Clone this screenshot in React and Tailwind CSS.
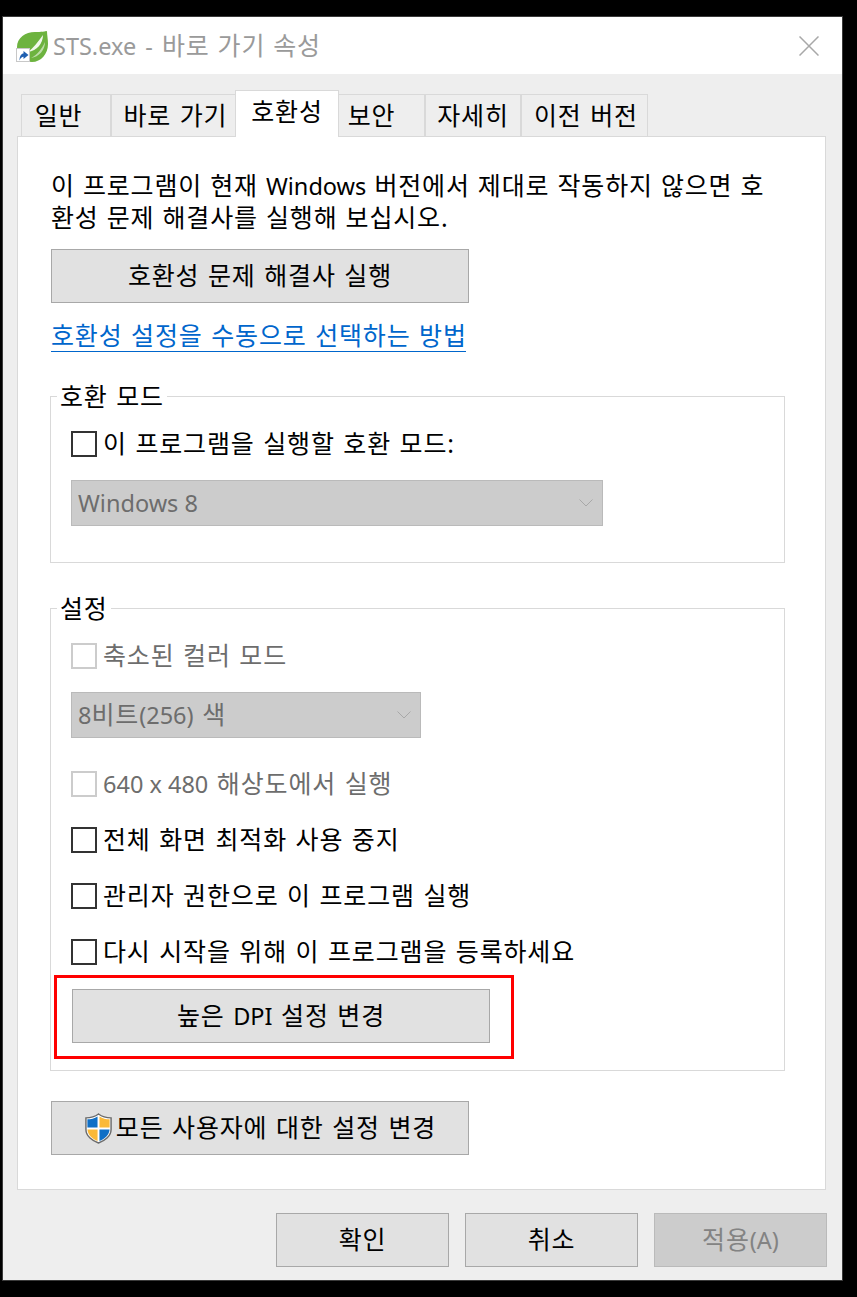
import React from 'react';

const FONT = "font-['Noto_Sans','Noto_Sans_CJK_KR',sans-serif]";

// latin runs are narrower than the hangul around them
const L = ({ children, className = '' }) => (
  <span className={`text-[23.5px] leading-none tracking-normal [word-spacing:0] ${className}`}>{children}</span>
);

const SpringIcon = () => (
  <div className="relative w-8 h-8 shrink-0">
    <svg viewBox="0 0 32 32" className="w-8 h-8">
      <path d="M31 1C31 1 27 2 21 2C11 1 1 7 1 17C1 25 8 32 16 32C25 32 32 24 32 14C32 9 31 5 31 1Z" fill="#6db33f" />
      <path d="M27 5C27 13 21 21 12 22C17 18 22 12 27 5Z" fill="#ffffff" opacity="0.9" />
      <path d="M29 12C29 20 23 27 15 28C21 25 26 19 29 12Z" fill="#ffffff" opacity="0.55" />
    </svg>
    <div className="absolute left-0 bottom-0 w-[14px] h-[14px] bg-white border border-[#c8c8c8] flex items-center justify-center">
      <svg viewBox="0 0 12 12" className="w-3 h-3">
        <path d="M2.500 11.500C2.500 7 4.500 4.500 6.500 4.500V2L11.500 6L6.500 10V7.800C5 7.800 3.500 9 2.500 11.500Z" fill="#1f5fb0" />
      </svg>
    </div>
  </div>
);

const Shield = () => (
  <svg viewBox="0 0 30 32" className="w-[29px] h-[31px] shrink-0 mr-[3px]">
    <path d="M15 1C11 4 6 5 2 5V17C2 24 9 29 15 31C21 29 28 24 28 17V5C24 5 19 4 15 1Z" fill="#ffffff" stroke="#6b6b6b" strokeWidth="1.500" />
    <path d="M14 3.500C11 5.500 7 6.500 3.500 6.500V15H14Z" fill="#0f6fc6" />
    <path d="M16 3.500C19 5.500 23 6.500 26.500 6.500V15H16Z" fill="#fbb938" />
    <path d="M3.500 17H14V29C9 27 4 23 3.500 17Z" fill="#fbb938" />
    <path d="M16 17H26.500C26 23 21 27 16 29Z" fill="#0f6fc6" />
  </svg>
);

const Chevron = () => (
  <svg viewBox="0 0 14 8" className="w-[14px] h-2">
    <path d="M0.500 0.500L7 7L13.500 0.500" fill="none" stroke="#a8a8a8" strokeWidth="1" />
  </svg>
);

const Button = ({ children, className = '' }) => (
  <div className={`h-[54px] bg-[#e1e1e1] border border-[#a8a8a8] flex items-center justify-center text-black ${className}`}>
    {children}
  </div>
);

const Check = ({ label, disabled, className = '' }) => (
  <div className={`flex items-center h-[26px] ${className}`}>
    <div className={`w-[26px] h-[26px] shrink-0 border-2 bg-white ${disabled ? 'border-[#cccccc]' : 'border-[#333333]'}`} />
    <span className={`ml-[6px] whitespace-nowrap ${disabled ? 'text-[#6d6d6d]' : 'text-black'}`}>{label}</span>
  </div>
);

const Select = ({ value, className = '' }) => (
  <div className={`h-[46px] bg-[#cccccc] border border-[#bababa] flex items-center justify-between pl-[6px] pr-[9px] text-[#6d6d6d] ${className}`}>
    <span className="whitespace-nowrap">{value}</span>
    <Chevron />
  </div>
);

const Group = ({ title, className = '', children }) => (
  <div className={`relative border border-[#d9d9d9] w-[735px] pl-[20px] ${className}`}>
    <span className="absolute left-[6px] -top-[17px] h-8 leading-8 px-[3px] bg-white text-black whitespace-nowrap">{title}</span>
    {children}
  </div>
);

const tabs = [
  { label: '일반', w: 'w-[91px] pr-4' },
  { label: '바로 가기', w: 'w-[127px] pl-1' },
  { label: '호환성', w: 'w-[104px]', active: true },
  { label: '보안', w: 'w-[89px] pr-5' },
  { label: '자세히', w: 'w-[98px]' },
  { label: '이전 버전', w: 'w-[128px] pl-1' },
];

export default function App() {
  return (
    <div className={`w-[857px] h-[1297px] bg-black pt-4 pl-[2px] text-[25px] tracking-[0.85px] [word-spacing:1.2px] ${FONT}`}>
      <div className="w-[841px] h-[1265px] border border-[#3a3a3a] bg-[#eeeeee] flex flex-col">
        <div className="h-[57px] bg-white flex items-center pl-[13px] pr-[23px] shrink-0">
          <SpringIcon />
          <span className="ml-[5px] text-[#9a9a9a] whitespace-nowrap [word-spacing:0.600px]"><L className="[word-spacing:3px]">STS.exe - </L>바로 가기 속성</span>
          <svg viewBox="0 0 20 20" className="w-5 h-5 ml-auto">
            <path d="M0.500 0.500L19.500 19.500M19.500 0.500L0.500 19.500" stroke="#a8a8a8" strokeWidth="1.500" />
          </svg>
        </div>

        <div className="flex pl-[18px] mt-[20px] h-[42px] items-end relative z-10 shrink-0">
          {tabs.map((t) =>
            t.active ? (
              <div key={t.label} className={`${t.w} h-[47px] -mb-[1px] -mr-[2px] relative z-10 bg-white border border-b-0 border-[#d9d9d9] flex items-center justify-center text-black whitespace-nowrap pb-1`}>
                {t.label}
              </div>
            ) : (
              <div key={t.label} className={`${t.w} h-[42px] border border-b-0 border-[#d9d9d9] -mr-[2px] last:mr-0 flex items-center justify-center text-black whitespace-nowrap`}>
                {t.label}
              </div>
            )
          )}
        </div>

        <div className="ml-[14px] w-[809px] h-[1054px] bg-white border border-[#d9d9d9] pl-[33px] pt-[32px] shrink-0">
          <p className="leading-8 text-black whitespace-nowrap [word-spacing:0.700px]">
            이 프로그램이 현재 <L>Windows</L> 버전에서 제대로 작동하지 않으면 호<br />
            환성 문제 해결사를 실행해 보십시오.
          </p>
          <Button className="w-[418px] mt-[16px]">호환성 문제 해결사 실행</Button>
          <div className="mt-[16px] h-[33px] w-[415px] border-b border-[#0066cc] text-[#0066cc] leading-8 whitespace-nowrap">
            호환성 설정을 수동으로 선택하는 방법
          </div>
          <Group title="호환 모드" className="-ml-[1px] mt-[44px] h-[167px] pt-[34px]">
            <Check label="이 프로그램을 실행할 호환 모드:" />
            <Select value={<L>Windows 8</L>} className="w-[532px] mt-[23px]" />
          </Group>
          <Group title="설정" className="-ml-[1px] mt-[45px] h-[463px] pt-[34px]">
            <Check label="축소된 컬러 모드" disabled />
            <Select value={<><L>8</L>비트<L>(256)</L> 색</>} className="w-[350px] mt-[23px]" />
            <Check label={<><L>640 x 480</L> 해상도에서 실행</>} disabled className="mt-[33px]" />
            <Check label="전체 화면 최적화 사용 중지" className="mt-[30px]" />
            <Check label="관리자 권한으로 이 프로그램 실행" className="mt-[30px]" />
            <Check label="다시 시작을 위해 이 프로그램을 등록하세요" className="mt-[30px]" />
            <div className="relative mt-[24px]">
              <Button className="w-[418px] ml-[1px]"><span className="whitespace-nowrap">높은 <L>DPI</L> 설정 변경</span></Button>
              <div className="absolute -left-[17px] -top-[14px] w-[460px] h-[84px] border-[3px] border-[#ff0000]" />
            </div>
          </Group>
          <Button className="w-[418px] mt-[30px]">
            <Shield />
            <span className="whitespace-nowrap">모든 사용자에 대한 설정 변경</span>
          </Button>
        </div>

        <div className="flex justify-end gap-4 pr-[15px] mt-[23px]">
          <Button className="w-[173px]">확인</Button>
          <Button className="w-[173px]">취소</Button>
          <div className="w-[173px] h-[54px] bg-[#cccccc] border border-[#bababa] flex items-center justify-center text-[#838383]"><span>적용<L>(A)</L></span></div>
        </div>
      </div>
    </div>
  );
}
